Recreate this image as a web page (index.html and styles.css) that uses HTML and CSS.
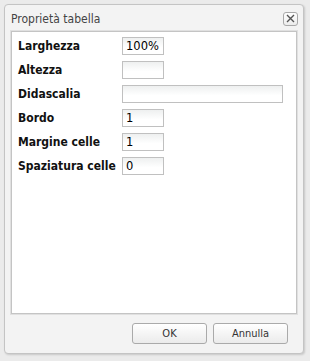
FILE: index.html
```html
<!DOCTYPE html>
<html lang="it">
<head>
<meta charset="utf-8">
<title>Proprietà tabella</title>
<link rel="stylesheet" href="styles.css">
</head>
<body>
<div class="dialog">
  <div class="titlebar">
    <span class="title">Proprietà tabella</span>
    <span class="close"><svg width="9" height="9" viewBox="0 0 9 9"><path d="M1 1L8 8M8 1L1 8" stroke="#555" stroke-width="1.4" fill="none"/></svg></span>
  </div>
  <div class="panel">
    <div class="form">
      <label class="lbl">Larghezza</label><input class="inp" value="100%">
      <label class="lbl">Altezza</label><input class="inp" value="">
      <label class="lbl">Didascalia</label><input class="inp wide" value="">
      <label class="lbl">Bordo</label><input class="inp" value="1">
      <label class="lbl">Margine celle</label><input class="inp" value="1">
      <label class="lbl">Spaziatura celle</label><input class="inp" value="0">
    </div>
  </div>
  <div class="buttons">
    <button class="btn">OK</button>
    <button class="btn">Annulla</button>
  </div>
</div>
</body>
</html>
```
FILE: styles.css
```css
html, body {
  margin: 0;
  padding: 0;
}
body {
  background: #ebebeb;
  width: 310px;
  height: 361px;
  padding: 4px 0 0 4px;
  box-sizing: border-box;
  font-family: "DejaVu Sans Condensed", "DejaVu Sans", sans-serif;
}
.dialog {
  width: 300px;
  height: 350px;
  box-sizing: border-box;
  border: 1px solid #c4c4c4;
  border-radius: 4px;
  background: #f3f3f3;
  box-shadow: 1px 1px 2px rgba(0,0,0,0.15);
  display: flex;
  flex-direction: column;
  padding: 0 5px;
}
.titlebar {
  height: 25px;
  display: flex;
  align-items: center;
  justify-content: space-between;
  padding: 0 0 0 1px;
}
.title {
  font-family: "DejaVu Sans Condensed", "DejaVu Sans", sans-serif;
  font-stretch: semi-condensed;
  font-size: 12px;
  color: #444;
  margin-top: 2px;
}
.close {
  width: 13px;
  height: 12px;
  border: 1px solid #a9a9a9;
  border-radius: 3px;
  background: linear-gradient(#ffffff, #ececec);
  display: flex;
  align-items: center;
  justify-content: center;
  margin-top: 2px;
}
.panel {
  height: 285px;
  box-sizing: border-box;
  border: 1px solid #e0e0e0;
  box-shadow: inset 0 0 0 1px #c4c4c4;
  background: #fff;
  padding: 6px 7px;
}
.form {
  display: grid;
  grid-template-columns: 104px auto;
  row-gap: 6px;
  align-items: center;
}
.lbl {
  font-family: "DejaVu Sans Condensed", "DejaVu Sans", sans-serif;
  font-stretch: semi-condensed;
  font-weight: bold;
  font-size: 12px;
  color: #111;
  line-height: 18px;
}
.inp {
  width: 42px;
  height: 18px;
  box-sizing: border-box;
  border: 1px solid #c0c0c0;
  background: linear-gradient(#eef0f0, #ffffff 60%);
  font-family: "DejaVu Sans", sans-serif;
  font-size: 11.5px;
  color: #000;
  padding: 0 3px;
  margin: 0;
  outline: none;
}
.inp.wide {
  width: 161px;
}
.buttons {
  flex: 1;
  display: flex;
  justify-content: flex-end;
  align-items: center;
  gap: 6px;
  padding: 0 10px 2px 0;
}
.btn {
  width: 75px;
  height: 21px;
  border: 1px solid #aaa;
  border-radius: 3px;
  background: linear-gradient(#ffffff, #ebebeb);
  font-family: "DejaVu Sans Condensed", "DejaVu Sans", sans-serif;
  font-stretch: semi-condensed;
  font-size: 11px;
  color: #333;
  padding: 0;
  margin: 0;
}
```
